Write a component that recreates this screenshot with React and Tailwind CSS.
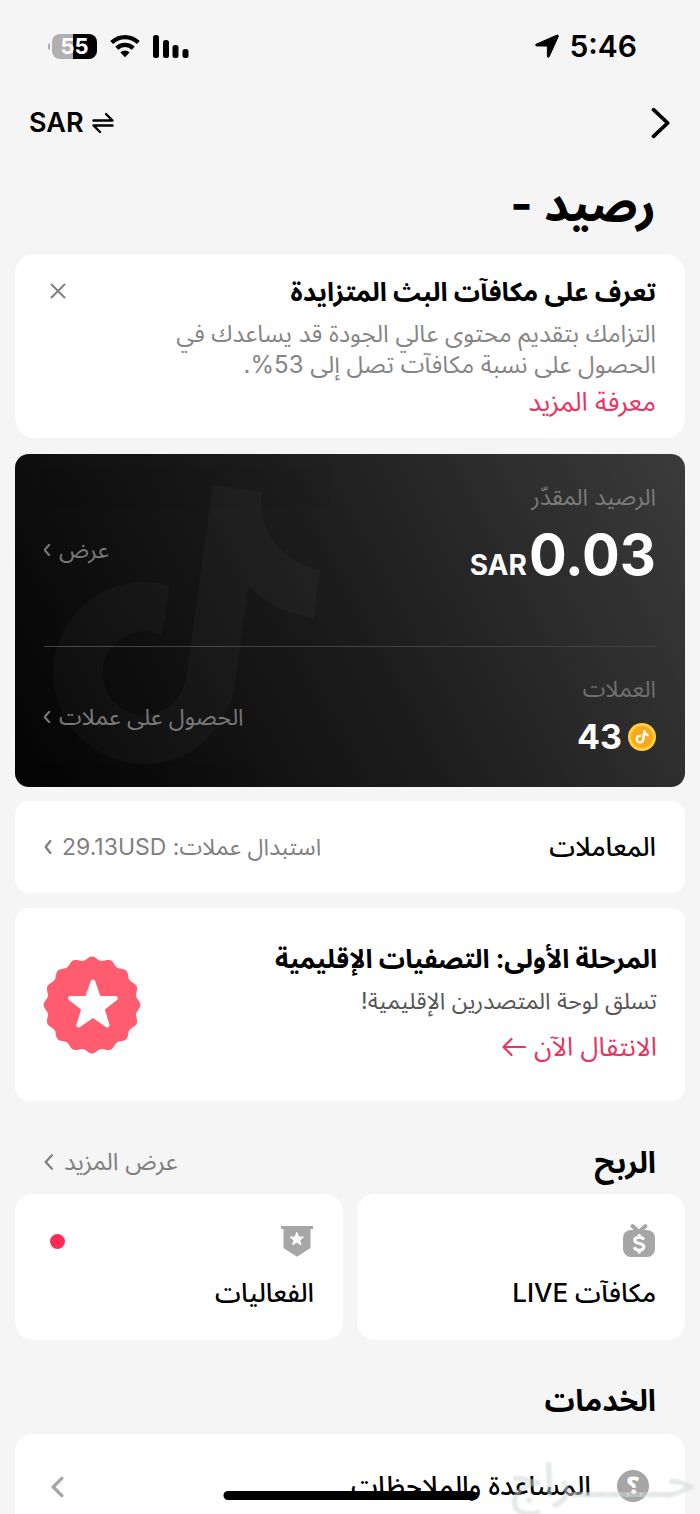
import React from "react";

const NOTE =
  "M448 209.9a210.1 210.1 0 0 1-122.800-39.250v178.750A162.550 162.550 0 1 1 185 188.310v89.890a74.620 74.620 0 1 0 52.230 71.180V0h88a121.180 121.180 0 0 0 1.860 22.170A122.180 122.180 0 0 0 381 102.390a121.430 121.430 0 0 0 67 20.140z";

const STAR =
  "M12 2.200c.5 0 .8.300 1 .8l2.100 6.100h6.200c1.200 0 1.600 1.100.7 1.800l-5 3.800 1.900 6.200c.3 1.100-.6 1.700-1.500 1.100L12 18.300 6.600 22c-.9.600-1.800 0-1.500-1.100L7 14.700l-5-3.800c-.9-.7-.5-1.800.7-1.800h6.200L11 3c.2-.5.500-.8 1-.8z";

function Chevron({ className, points, weight }) {
  return (
    <svg viewBox="0 0 24 24" fill="none" stroke="currentColor" strokeWidth={weight} strokeLinecap="round" strokeLinejoin="round" className={className} aria-hidden="true">
      <polyline points={points} />
    </svg>
  );
}

function StatusBar() {
  return (
    <div dir="ltr" className="flex h-[92px] items-center justify-between pr-[63px] pl-12">
      <div className="flex items-center gap-[13px]">
        <div className="flex items-center gap-[2px]">
          <span className="h-[7px] w-[2px] rounded-l-full bg-[#b0b0b0]" />
          <span className="flex h-[25px] w-[45px] items-center justify-center rounded-lg bg-[linear-gradient(90deg,#b0b0b0_46%,#000_46%)] text-[22px] leading-[25px] font-bold text-white">
            55
          </span>
        </div>
        <svg viewBox="0 0 30 24" className="h-6 w-[30px]" fill="none" stroke="#000" strokeWidth="4.200" aria-hidden="true">
          <path d="M1.700 8.600a19 19 0 0 1 26.600 0" />
          <path d="M6.800 14.300a11.500 11.500 0 0 1 16.400 0" />
          <path d="M15 23.200l-4.600-4.700a6.500 6.500 0 0 1 9.200 0z" fill="#000" stroke="none" />
        </svg>
        <svg viewBox="0 0 36 24" className="h-6 w-9" aria-hidden="true">
          <rect x="0" y="1" width="6" height="23" rx="2.500" />
          <rect x="10" y="6" width="6" height="18" rx="2.500" />
          <rect x="19.500" y="11" width="6" height="13" rx="2.500" />
          <rect x="29.500" y="15" width="6" height="9" rx="2.500" />
        </svg>
      </div>
      <div className="flex items-center gap-[10px]">
        <svg viewBox="0 0 24 24" className="h-6 w-6" stroke="#000" strokeWidth="1" strokeLinejoin="round" aria-hidden="true">
          <path d="M1.200 10.200 21.700 1.200c1.200-.5 2 .3 1.500 1.500L14.300 22.400c-.6 1.300-1.900 1-1.900-.3V12.100L1.800 11.900c-1.200 0-1.700-1.200-.6-1.700z" />
        </svg>
        <span className="text-[30px] leading-8 font-semibold">5:46</span>
      </div>
    </div>
  );
}

function Medal() {
  const points = Array.from({ length: 192 }, (_, i) => {
    const a = (i / 192) * Math.PI * 2;
    const r = 46.700 + 1.700 * Math.cos(a * 16);
    return `${(49 + r * Math.sin(a)).toFixed(2)},${(49 - r * Math.cos(a)).toFixed(2)}`;
  }).join(" ");
  return (
    <svg viewBox="0 0 98 98" className="h-[98px] w-[98px] shrink-0" aria-hidden="true">
      <polygon points={points} fill="#ff5c6f" />
      <path d={STAR} fill="#fff" transform="translate(21.400 18.200) scale(2.380 2.400)" />
    </svg>
  );
}

export default function App() {
  return (
    <main
      dir="rtl"
      className="relative min-h-screen overflow-hidden bg-[#f5f5f5] font-['Inter','Noto_Sans_Arabic','DejaVu_Sans',sans-serif] text-black"
    >
      <StatusBar />

      <header className="flex h-[62px] items-center justify-between px-[29px]">
        <button aria-label="رجوع" className="flex">
          <Chevron className="h-9 w-5" points="3 -4 20 12 3 28" weight={4.5} />
        </button>
        <button dir="ltr" className="flex items-center gap-2 text-[27px] leading-8 font-semibold">
          SAR
          <svg viewBox="0 0 22 22" className="h-[22px] w-[22px]" fill="none" stroke="#000" strokeWidth="2.400" strokeLinecap="round" strokeLinejoin="round" aria-hidden="true">
            <path d="M1.500 8.500h19L14 2M20.500 13.500h-19L8 20" />
          </svg>
        </button>
      </header>

      <h1 className="px-11 pt-5 text-[48px] leading-[60px] font-bold">رصيد -</h1>

      <div className="flex flex-col px-[15px] pt-5">
        <section className="flex h-[184px] items-start justify-between rounded-[20px] bg-white px-[29px] pt-5">
          <div>
            <h2 className="text-[26px] leading-9 font-bold">تعرف على مكافآت البث المتزايدة</h2>
            <p className="pt-2 text-[24px] leading-[31px] text-[#858585]">
              التزامك بتقديم محتوى عالي الجودة قد يساعدك في
              <br />
              الحصول على نسبة مكافآت تصل إلى 53%.
            </p>
            <a href="#more" className="block pt-1 text-[26px] leading-9 text-[#ea3360]">معرفة المزيد</a>
          </div>
          <button aria-label="إغلاق" className="flex p-[6px] pt-[9px] text-[#808080]">
            <svg viewBox="0 0 16 16" className="h-4 w-4" stroke="currentColor" strokeWidth="2" strokeLinecap="round" aria-hidden="true">
              <path d="M1.500 1.500l13 13M14.500 1.500l-13 13" />
            </svg>
          </button>
        </section>

        <section className="relative mt-4 flex h-[333px] flex-col overflow-hidden rounded-[14px] bg-[linear-gradient(62deg,#030303_0%,#1c1c1c_50%,#3b3b3b_100%)] px-[29px]">
          <svg viewBox="0 0 300 300" className="absolute top-[25px] left-[37px] h-[300px] w-[300px] opacity-[0.022]" aria-hidden="true">
            <path d={NOTE} fill="#fff" transform="rotate(8 150 150) translate(8 6) scale(.56)" />
          </svg>
          <div className="flex h-[193px] items-center justify-between border-b border-[#424242]">
            <div>
              <p className="text-[23px] leading-8 text-[#7c7c7c]">الرصيد المقدّر</p>
              <p dir="ltr" className="flex items-baseline justify-end gap-[2px] pt-3 pb-6 leading-[60px] font-bold text-white">
                <span className="text-[28px]">SAR</span>
                <span className="text-[56px]">0.03</span>
              </p>
            </div>
            <button className="flex items-center gap-2 text-[23px] leading-8 text-[#777]">
              عرض
              <Chevron className="h-3 w-[7px]" points="18 -6 2 12 18 30" weight={7} />
            </button>
          </div>
          <div className="flex flex-1 items-center justify-between">
            <div className="pb-1">
              <p className="text-[23px] leading-8 text-[#707070]">العملات</p>
              <p className="flex items-center gap-[6px] pt-3 text-[34px] leading-10 font-bold text-white">
                <svg viewBox="0 0 28 28" className="h-7 w-7" aria-hidden="true">
                  <circle cx="14" cy="14" r="14" fill="#ffd043" />
                  <circle cx="14" cy="14" r="11" fill="#fba81a" />
                  <path d={NOTE} fill="#fff" transform="rotate(8 14 14) translate(7.800 6.800) scale(.0275)" />
                </svg>
                43
              </p>
            </div>
            <button className="flex items-center gap-2 text-[23px] leading-8 text-[#777]">
              الحصول على عملات
              <Chevron className="h-3 w-[7px]" points="18 -6 2 12 18 30" weight={7} />
            </button>
          </div>
        </section>

        <section className="mt-[14px] flex h-[92px] items-center justify-between rounded-[14px] bg-white px-[29px]">
          <h2 className="text-[26px] leading-8 font-medium">المعاملات</h2>
          <button className="flex items-center gap-[10px] text-[23px] leading-8 text-[#808080]">
            <span>استبدال عملات: 29.13USD</span>
            <Chevron className="h-[14px] w-2" points="19 -6 5 12 19 30" weight={7} />
          </button>
        </section>

        <section className="mt-[15px] flex h-[193px] items-center justify-between rounded-[14px] bg-white px-7">
          <div className="pb-1">
            <h2 className="text-[26px] leading-9 font-bold">المرحلة الأولى: التصفيات الإقليمية</h2>
            <p className="pt-2 text-[23px] leading-8 text-[#555]">تسلق لوحة المتصدرين الإقليمية!</p>
            <a href="#go" className="flex items-center gap-2 pt-3 text-[26px] leading-9 text-[#ea3360]">
              الانتقال الآن
              <svg viewBox="0 0 24 20" className="h-5 w-6" fill="none" stroke="currentColor" strokeWidth="2.200" strokeLinecap="round" strokeLinejoin="round" aria-hidden="true">
                <path d="M23 10H1.500M9.500 2l-8 8 8 8" />
              </svg>
            </a>
          </div>
          <Medal />
        </section>

        <div className="flex h-[93px] items-end justify-between px-[29px] pb-4">
          <h2 className="text-[30px] leading-8 font-bold">الربح</h2>
          <button className="flex items-center gap-[10px] text-[24px] leading-8 text-[#808080]">
            عرض المزيد
            <Chevron className="h-4 w-[10px]" points="19 -4 4 12 19 28" weight={5.5} />
          </button>
        </div>

        <div className="grid grid-cols-2 gap-[14px]">
          <a href="#rewards" className="flex h-[146px] flex-col items-start rounded-[18px] bg-white px-[29px] pt-[29px]">
            <svg viewBox="0 0 34 34" className="h-[34px] w-[34px]" aria-hidden="true">
              <rect x="1" y="7" width="32" height="27" rx="8" fill="#a6a6a6" />
              <path d="M10.500 3l6.500 6 6.500-6" fill="none" stroke="#a6a6a6" strokeWidth="4" strokeLinecap="round" strokeLinejoin="round" />
              <path d="M21.700 16.600c-.7-1.600-2.300-2.400-4.500-2.400-2.600 0-4.500 1.100-4.500 3 0 4.400 9.200 2 9.200 6.600 0 2-1.900 3.400-4.600 3.400-2.500 0-4.400-1-5-2.900M17.200 11v3.500M17.200 27v3.500" fill="none" stroke="#fff" strokeWidth="3" />
            </svg>
            <span className="pt-5 text-[26px] leading-8 font-medium">مكافآت LIVE</span>
          </a>
          <a href="#events" className="flex h-[146px] items-start justify-between rounded-[18px] bg-white px-[29px] pt-[29px]">
            <span className="flex flex-col items-start">
              <svg viewBox="0 0 34 34" className="h-[34px] w-[34px]" aria-hidden="true">
                <path d="M1 3h32v3h-2.500v19L17.500 33.500h-1L3.500 25V6H1z" fill="#a6a6a6" />
                <path d={STAR} fill="#fff" transform="translate(8.900 7.500) scale(.66)" />
              </svg>
              <span className="pt-5 text-[26px] leading-8 font-medium">الفعاليات</span>
            </span>
            <span className="mt-[11px] ml-[6px] h-[15px] w-[15px] rounded-full bg-[#fe2c55]" />
          </a>
        </div>

        <div className="flex h-[94px] items-end px-[29px] pb-[18px]">
          <h2 className="text-[30px] leading-8 font-bold">الخدمات</h2>
        </div>

        <a href="#help" className="flex h-20 items-start justify-between rounded-t-[18px] bg-white px-9 pt-9">
          <span className="flex items-center gap-[26px] text-[27px] leading-8 font-medium">
            <span className="flex h-8 w-8 items-center justify-center rounded-full bg-[#a6a6a6] text-[24px] font-black text-white">؟</span>
            المساعدة والملاحظات
          </span>
          <Chevron className="mt-[6px] h-[22px] w-[13px] text-[#a6a6a6]" points="20 -4 4 12 20 28" weight={6} />
        </a>
      </div>

      <div className="absolute bottom-[14px] left-1/2 h-[9px] w-[253px] -translate-x-1/2 rounded-full bg-black" />
      <span className="pointer-events-none absolute right-[5px] bottom-1 text-[48px] leading-[60px] font-medium text-white/30 [text-shadow:0_0_2px_rgb(150_165_170/0.35)]">
        حـــــــراج
      </span>
    </main>
  );
}
